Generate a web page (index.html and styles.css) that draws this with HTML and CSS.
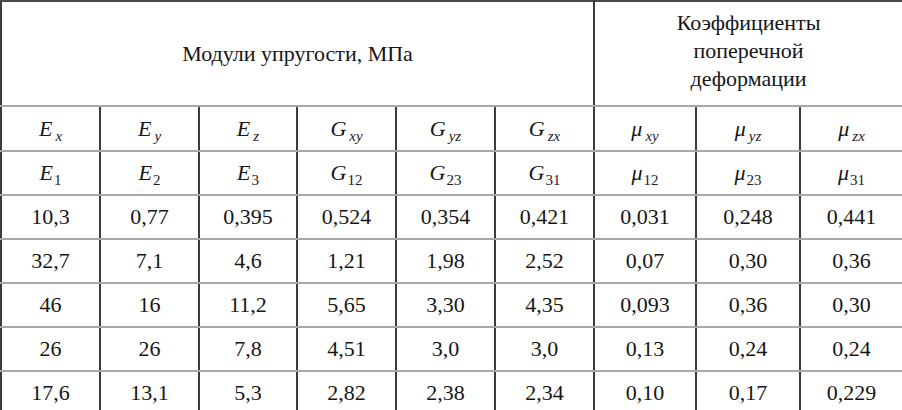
FILE: index.html
```html
<!DOCTYPE html>
<html>
<head>
<meta charset="utf-8">
<title>Модули упругости</title>
<link rel="stylesheet" href="styles.css">
</head>
<body>
<table class="props">
  <colgroup>
    <col class="c1"><col class="c2"><col class="c3"><col class="c4"><col class="c5"><col class="c6"><col class="c7"><col class="c8"><col class="c9">
  </colgroup>
  <tr class="head">
    <td colspan="6">Модули упругости, МПа</td>
    <td colspan="3" class="coef">Коэффициенты<br>поперечной<br>деформации</td>
  </tr>
  <tr class="sym first">
    <td><i>E</i><sub class="v">x</sub></td>
    <td><i>E</i><sub class="v">y</sub></td>
    <td><i>E</i><sub class="v">z</sub></td>
    <td><i>G</i><sub class="v">xy</sub></td>
    <td><i>G</i><sub class="v">yz</sub></td>
    <td><i>G</i><sub class="v">zx</sub></td>
    <td><i class="mu">μ</i><sub class="v">xy</sub></td>
    <td><i class="mu">μ</i><sub class="v">yz</sub></td>
    <td><i class="mu">μ</i><sub class="v">zx</sub></td>
  </tr>
  <tr class="sym">
    <td><i>E</i><sub class="n">1</sub></td>
    <td><i>E</i><sub class="n">2</sub></td>
    <td><i>E</i><sub class="n">3</sub></td>
    <td><i>G</i><sub class="n">12</sub></td>
    <td><i>G</i><sub class="n">23</sub></td>
    <td><i>G</i><sub class="n">31</sub></td>
    <td><i class="mu">μ</i><sub class="n">12</sub></td>
    <td><i class="mu">μ</i><sub class="n">23</sub></td>
    <td><i class="mu">μ</i><sub class="n">31</sub></td>
  </tr>
  <tr class="data">
    <td>10,3</td><td>0,77</td><td>0,395</td><td>0,524</td><td>0,354</td><td>0,421</td><td>0,031</td><td>0,248</td><td>0,441</td>
  </tr>
  <tr class="data">
    <td>32,7</td><td>7,1</td><td>4,6</td><td>1,21</td><td>1,98</td><td>2,52</td><td>0,07</td><td>0,30</td><td>0,36</td>
  </tr>
  <tr class="data">
    <td>46</td><td>16</td><td>11,2</td><td>5,65</td><td>3,30</td><td>4,35</td><td>0,093</td><td>0,36</td><td>0,30</td>
  </tr>
  <tr class="data">
    <td>26</td><td>26</td><td>7,8</td><td>4,51</td><td>3,0</td><td>3,0</td><td>0,13</td><td>0,24</td><td>0,24</td>
  </tr>
  <tr class="data">
    <td>17,6</td><td>13,1</td><td>5,3</td><td>2,82</td><td>2,38</td><td>2,34</td><td>0,10</td><td>0,17</td><td>0,229</td>
  </tr>
</table>
</body>
</html>
```
FILE: styles.css
```css
html, body {
  margin: 0;
  padding: 0;
  background: #ffffff;
}
body {
  font-family: "Liberation Serif";
  font-size: 22px;
  color: #161616;
}
.props {
  border-collapse: collapse;
  table-layout: fixed;
  width: 902px;
}
.props td {
  font-family: "Liberation Serif";
  font-size: 22px;
  text-align: center;
  vertical-align: middle;
  padding: 0;
  border-left: 2px solid #3c3c3c;
  border-right: 2px solid #3c3c3c;
  border-top: 2px solid #a8a8a8;
  border-bottom: 2px solid #a8a8a8;
  line-height: 28px;
}
.c1 { width: 99px; }
.c2 { width: 99px; }
.c3 { width: 98px; }
.c4 { width: 99px; }
.c5 { width: 99px; }
.c6 { width: 99px; }
.c7 { width: 102px; }
.c8 { width: 104px; }
.c9 { width: 103px; }
.props tr.head td {
  border-top: 2px solid #4a4a4a;
  height: 97px;
}
.props td.coef {
  padding-bottom: 6px;
}
.props tr.sym.first td { height: 43px; }
.props tr.sym td { height: 42px; }
.props tr.data td { height: 42px; }
.props i {
  font-family: "Liberation Serif";
  font-style: italic;
  font-size: 22px;
}
.props sub {
  font-family: "Liberation Serif";
  font-size: 15px;
  line-height: 0;
  vertical-align: -5px;
  margin-left: 1px;
  color: #24192c;
}
.props sub.v {
  font-style: italic;
  margin-left: 3px;
}
```
